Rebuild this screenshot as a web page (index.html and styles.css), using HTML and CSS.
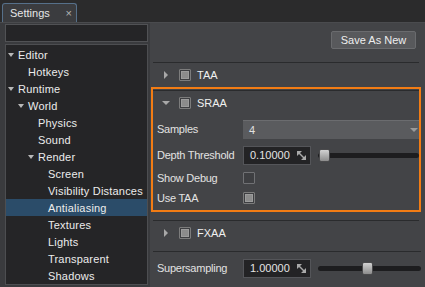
FILE: index.html
```html
<!DOCTYPE html>
<html lang="en">
<head>
    <meta charset="utf-8">
    <title>Settings</title>
    <link rel="stylesheet" href="styles.css">
</head>
<body>
    <div class="tabbar">
        <div class="tab"><span>Settings</span><span class="close">&#215;</span></div>
    </div>
    <div class="main">
        <div class="sidebar">
            <div class="search"></div>
            <ul class="tree">
                <li class="l0 open"><i class="tw"></i>Editor</li>
                <li class="l1"><i class="tw"></i>Hotkeys</li>
                <li class="l0 open"><i class="tw"></i>Runtime</li>
                <li class="l1 open"><i class="tw"></i>World</li>
                <li class="l2"><i class="tw"></i>Physics</li>
                <li class="l2"><i class="tw"></i>Sound</li>
                <li class="l2 open"><i class="tw"></i>Render</li>
                <li class="l3"><i class="tw"></i>Screen</li>
                <li class="l3"><i class="tw"></i>Visibility Distances</li>
                <li class="l3 sel"><i class="tw"></i>Antialiasing</li>
                <li class="l3"><i class="tw"></i>Textures</li>
                <li class="l3"><i class="tw"></i>Lights</li>
                <li class="l3"><i class="tw"></i>Transparent</li>
                <li class="l3"><i class="tw"></i>Shadows</li>
            </ul>
        </div>
        <div class="content">
            <div class="toolbar">
                <button class="btn">Save As New</button>
            </div>

            <div class="section">
                <div class="sep"></div>
                <div class="head">
                    <span class="arr"><i class="right"></i></span>
                    <span class="check on"></span>
                    <span class="title">TAA</span>
                </div>
            </div>

            <div class="section active">
                <div class="sep"></div>
                <div class="head">
                    <span class="arr"><i class="down"></i></span>
                    <span class="check on"></span>
                    <span class="title">SRAA</span>
                </div>
                <div class="rows">
                    <div class="row">
                        <span class="label">Samples</span>
                        <div class="select"><span>4</span><i class="down"></i></div>
                    </div>
                    <div class="row">
                        <span class="label">Depth Threshold</span>
                        <div class="num">
                            <span>0.10000</span>
                            <svg class="expand" width="9" height="9" viewBox="0 0 9 9">
                                <path d="M0 0h5L0 5z M9 9H4L9 4z" fill="#a9a9a9"/>
                                <path d="M1.5 1.5L7.5 7.5" stroke="#a9a9a9" stroke-width="1.4"/>
                            </svg>
                        </div>
                        <div class="slider"><div class="track"></div><div class="thumb" style="left: 1px"></div></div>
                    </div>
                    <div class="row short">
                        <span class="label">Show Debug</span>
                        <span class="check"></span>
                    </div>
                    <div class="row short">
                        <span class="label">Use TAA</span>
                        <span class="check on"></span>
                    </div>
                </div>
            </div>

            <div class="section gap">
                <div class="sep"></div>
                <div class="head">
                    <span class="arr"><i class="right"></i></span>
                    <span class="check on"></span>
                    <span class="title">FXAA</span>
                </div>
            </div>

            <div class="section gap2">
                <div class="sep"></div>
                <div class="row lone">
                    <span class="label">Supersampling</span>
                    <div class="num">
                        <span>1.00000</span>
                        <svg class="expand" width="9" height="9" viewBox="0 0 9 9">
                            <path d="M0 0h5L0 5z M9 9H4L9 4z" fill="#a9a9a9"/>
                            <path d="M1.5 1.5L7.5 7.5" stroke="#a9a9a9" stroke-width="1.4"/>
                        </svg>
                    </div>
                    <div class="slider"><div class="track"></div><div class="thumb" style="left: 44px"></div></div>
                </div>
            </div>
        </div>
    </div>
</body>
</html>
```

FILE: styles.css
```css
body {
    margin: 0;
    width: 425px;
    height: 287px;
    overflow: hidden;
    background: #2b2b2c;
    font: 11px "Liberation Sans", Arial, sans-serif;
    color: #e6e6e6;
}
ul {
    margin: 0;
    padding: 0;
    list-style-type: none;
}
.tabbar {
    height: 22px;
    display: flex;
    align-items: flex-end;
    padding-left: 2px;
}
.tab {
    width: 75px;
    height: 19px;
    box-sizing: border-box;
    border: 1px solid #56708a;
    border-bottom: none;
    border-radius: 3px 3px 0 0;
    background: #3b3c3f;
    display: flex;
    align-items: center;
    justify-content: space-between;
    padding: 0 4px 0 7px;
}
.close {
    color: #b4b4b4;
}
.main {
    display: flex;
    height: 264px;
    background: #3a3b3e;
    border-top: 1px solid #4a4b4e;
}
.sidebar {
    width: 143px;
    padding: 1px 1px 2px 5px;
    display: flex;
    flex-direction: column;
    gap: 2px;
}
.search {
    height: 19px;
    box-sizing: border-box;
    background: #252527;
    border: 1px solid #515255;
}
.tree {
    flex: 1;
    padding-top: 1px;
    background: #252527;
    border: 1px solid #4d4e51;
    color: #ececec;
    letter-spacing: 0.2px;
}
.tree li {
    height: 17px;
    display: flex;
    align-items: center;
    white-space: nowrap;
}
.tree .l0 { padding-left: 2px; }
.tree .l1 { padding-left: 12px; }
.tree .l2 { padding-left: 22px; }
.tree .l3 { padding-left: 32px; }
.tree .sel {
    background: #2b4c69;
}
.tw {
    width: 10px;
    flex: none;
}
.open .tw::before {
    content: "";
    display: block;
    width: 0;
    border-left: 3px solid transparent;
    border-right: 3px solid transparent;
    border-top: 4px solid #b8b8b8;
}
.content {
    flex: 1;
    margin-left: 1px;
    background: #434447;
}
.toolbar {
    height: 39px;
    box-sizing: border-box;
    display: flex;
    justify-content: flex-end;
    align-items: flex-start;
    padding: 8px 9px 0 0;
}
.btn {
    width: 85px;
    height: 18px;
    padding: 0;
    background: #58595c;
    border: 1px solid #6a6b6e;
    border-radius: 2px;
    color: #eeeeee;
    font: inherit;
}
.section {
    margin: 0 4px 0 1px;
    padding: 0 2px;
}
.section.active {
    border: 2px solid #f27c14;
    padding: 0;
}
.section.active .sep {
    margin-top: 1px;
}
.section.gap {
    margin-top: 8px;
}
.section.gap2 {
    margin-top: 6px;
    margin-right: 2px;
}
.sep {
    height: 1px;
    background: #2a2b2d;
}
.head {
    height: 24px;
    display: flex;
    align-items: center;
    padding-left: 9px;
}
.arr {
    width: 17px;
    flex: none;
    display: flex;
    align-items: center;
}
.right {
    display: block;
    margin-left: 2px;
    border-top: 4px solid transparent;
    border-bottom: 4px solid transparent;
    border-left: 4px solid #a8a8a8;
}
.down {
    display: block;
    border-left: 4px solid transparent;
    border-right: 4px solid transparent;
    border-top: 4px solid #a8a8a8;
}
.title {
    margin-left: 6px;
    color: #f0f0f0;
}
.check {
    width: 12px;
    height: 12px;
    box-sizing: border-box;
    flex: none;
    border: 1px solid #707174;
    border-radius: 1px;
    background: #3e3f42;
    padding: 1px;
}
.check.on {
    border-color: #7c7c7c;
}
.check.on::after {
    content: "";
    display: block;
    width: 8px;
    height: 8px;
    box-sizing: border-box;
    background: #8c8c8c;
    border: 1px solid #9c9c9c;
}
.rows {
    padding: 1px 0 2px;
}
.row {
    height: 26px;
    display: flex;
    align-items: center;
}
.row.short {
    height: 20px;
}
.row.lone {
    margin-top: 3px;
}
.label {
    width: 86px;
    padding-left: 4px;
    flex: none;
    white-space: nowrap;
    color: #e2e2e2;
    letter-spacing: -0.25px;
}
.select {
    flex: 1;
    height: 19px;
    box-sizing: border-box;
    background: #5a5b5e;
    border-top: 1px solid #6b6c6f;
    display: flex;
    align-items: center;
    justify-content: space-between;
    padding: 0 1px 0 6px;
    color: #e0e0e0;
}
.select .down {
    border-top-color: #9a9a9a;
}
.num {
    width: 68px;
    height: 19px;
    box-sizing: border-box;
    flex: none;
    background: #232325;
    border: 1px solid #545559;
    display: flex;
    align-items: center;
    justify-content: space-between;
    padding: 0 4px 0 6px;
    color: #e4e4e4;
}
.slider {
    flex: 1;
    height: 13px;
    margin-left: 7px;
    position: relative;
    display: flex;
    align-items: center;
}
.track {
    flex: 1;
    height: 5px;
    border-radius: 3px;
    background: #1d1d1f;
}
.thumb {
    position: absolute;
    top: 0;
    width: 11px;
    height: 13px;
    box-sizing: border-box;
    border: 1px solid #4a4a4c;
    border-radius: 2px;
    background: linear-gradient(#d2d2d2, #8c8c8c);
}
```
